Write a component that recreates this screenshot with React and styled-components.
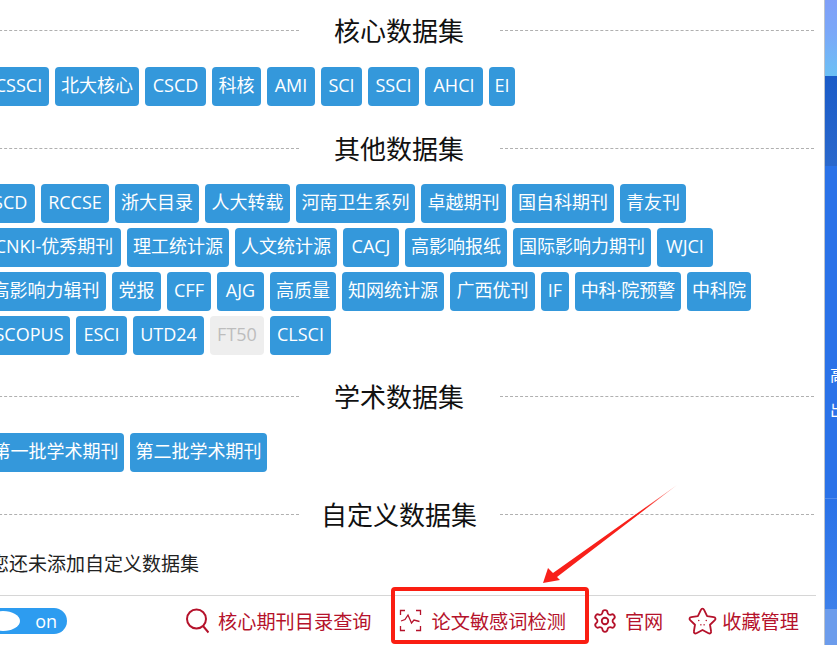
import React from "react";
import styled, { createGlobalStyle } from "styled-components";
import { Settings } from "lucide-react";

const Global = createGlobalStyle`
  html, body {
    margin: 0;
    padding: 0;
    height: 645px;
    overflow: hidden;
    background: #fff;
  }
  * { box-sizing: border-box; }
`;

const FONT = `"Open Sans", "Noto Sans CJK SC", sans-serif`;

const Page = styled.div`
  width: 837px;
  height: 645px;
  display: flex;
  overflow: hidden;
  position: relative;
  font-family: ${FONT};
`;

const Panel = styled.div`
  width: 825px;
  height: 645px;
  flex: none;
  background: #fff;
  border-right: 1px solid #bcc3cc;
  padding-top: 9px;
  overflow: hidden;
  display: flex;
  flex-direction: column;
`;

const Divider = styled.div`
  width: 830px;
  margin-left: -16px;
  height: 42px;
  flex: none;
  display: grid;
  grid-template-columns: 1fr 201px 1fr;
  align-items: center;
  margin-top: ${(p) => p.$top}px;
  &::before, &::after {
    content: "";
    border-top: 1px dashed #b0b0b0;
  }
`;

const Title = styled.div`
  font-size: 26px;
  line-height: 42px;
  padding-top: 1px;
  text-align: center;
  white-space: nowrap;
  color: #111;
`;

const Row = styled.div`
  display: flex;
  flex: none;
  gap: 6px;
  height: 39px;
  margin-top: ${(p) => p.$top || 5}px;
  margin-left: ${(p) => p.$left}px;
`;

const Tag = styled.span`
  flex: none;
  width: ${(p) => p.$w}px;
  height: 39px;
  border-radius: 4px;
  font-size: 18px;
  line-height: 37px;
  text-align: center;
  white-space: nowrap;
  background: ${(p) => (p.$off ? "#eeeeee" : "#3498db")};
  color: ${(p) => (p.$off ? "#bdbdbd" : "#fff")};
`;

const Empty = styled.div`
  font-size: 19px;
  line-height: 28px;
  color: #222;
  margin: 15px 0 0 -10px;
  flex: none;
  white-space: nowrap;
`;

const Footer = styled.div`
  flex: none;
  width: 816px;
  height: 50px;
  margin-top: 17px;
  border-top: 1px solid #d6d6d6;
  display: flex;
  align-items: center;
`;

const Toggle = styled.div`
  width: 87px;
  height: 26px;
  margin-left: -20px;
  border-radius: 13px;
  background: #2d9cf0;
  color: #fff;
  font-size: 18px;
  line-height: 26px;
  position: relative;
  display: flex;
  justify-content: flex-end;
  padding-right: 10px;
  &::before {
    content: "";
    position: absolute;
    left: 6px;
    top: 3px;
    width: 34px;
    height: 20px;
    border-radius: 50%;
    background: #fff;
  }
`;

const Links = styled.div`
  display: flex;
  align-items: center;
  margin-left: auto;
  margin-right: 17px;
`;

const LinkItem = styled.a`
  display: flex;
  align-items: center;
  height: 26px;
  gap: ${(p) => p.$gap}px;
  margin-left: ${(p) => p.$left || 0}px;
  color: #b5122b;
  font-size: 19.2px;
  line-height: 26px;
  white-space: nowrap;
  position: relative;
  svg { flex: none; }
`;

const Label = styled.span`
  padding-top: 2px;
`;

const Highlight = styled.div`
  position: absolute;
  left: -8px;
  top: -21px;
  width: 198px;
  height: 57px;
  border: 4px solid #fa1e12;
  border-radius: 4px;
`;

const Side = styled.div`
  flex: 1;
  height: 645px;
  display: flex;
  flex-direction: column;
  color: #fff;
  font-size: 16px;
  overflow: hidden;
`;

const SideTop = styled.div`
  height: 76px;
  background: linear-gradient(180deg, #7f9ff8 0%, #7aa8f8 45%, #6cc0f5 100%);
`;

const SideBand = styled.div`
  height: 90px;
  background: linear-gradient(180deg, #1a5bc8, #2a68cc);
`;

const SideMain = styled.div`
  height: 333px;
  padding: 192px 0 0 5px;
  line-height: 35px;
  background: #2a72e8;
  border-bottom: 1px solid #4f8aec;
`;

const SideMark = styled.div`
  width: 4px;
  height: 14px;
  margin: 29px 0 0 10px;
  background: #fff;
  border-radius: 2px;
`;

const SideLow = styled.div`
  height: 110px;
  background: linear-gradient(180deg, #2a72e8, #3d80ea);
`;

const SideFoot = styled.div`
  flex: 1;
  background: #6c9cec;
`;

const Arrow = styled.svg`
  position: absolute;
  left: 535px;
  top: 480px;
  pointer-events: none;
`;

const rows = {
  core: [["CSSCI", 61], ["北大核心", 84], ["CSCD", 61], ["科核", 49], ["AMI", 48], ["SCI", 41], ["SSCI", 51], ["AHCI", 58], ["EI", 26]],
  a: [["CSCD", 61], ["RCCSE", 68], ["浙大目录", 84], ["人大转载", 85], ["河南卫生系列", 119], ["卓越期刊", 85], ["国自科期刊", 102], ["青友刊", 66]],
  b: [["CNKI-优秀期刊", 134], ["理工统计源", 102], ["人文统计源", 102], ["CACJ", 56], ["高影响报纸", 102], ["国际影响力期刊", 138], ["WJCI", 56]],
  c: [["高影响力辑刊", 121], ["党报", 49], ["CFF", 44], ["AJG", 47], ["高质量", 66], ["知网统计源", 102], ["广西优刊", 85], ["IF", 28], ["中科·院预警", 106], ["中科院", 64]],
  d: [["SCOPUS", 82], ["ESCI", 51], ["UTD24", 71], ["FT50", 54], ["CLSCI", 61]],
  e: [["第一批学术期刊", 137], ["第二批学术期刊", 137]],
};

const Tags = ({ list, left, top }) => (
  <Row $left={left} $top={top}>
    {list.map(([t, w]) => (
      <Tag key={t} $w={w} $off={t === "FT50"}>{t}</Tag>
    ))}
  </Row>
);

const Heading = ({ top, children }) => (
  <Divider $top={top}>
    <Title>{children}</Title>
  </Divider>
);

const App = () => (
  <Page>
    <Global />
    <Panel>
      <Heading top={0}>核心数据集</Heading>
      <Tags list={rows.core} left={-12} top={16} />
      <Heading top={21}>其他数据集</Heading>
      <Tags list={rows.a} left={-26} top={15} />
      <Tags list={rows.b} left={-13} />
      <Tags list={rows.c} left={-15} />
      <Tags list={rows.d} left={-12} />
      <Heading top={20}>学术数据集</Heading>
      <Tags list={rows.e} left={-13} top={16} />
      <Heading top={21}>自定义数据集</Heading>
      <Empty>您还未添加自定义数据集</Empty>
      <Footer>
        <Toggle>on</Toggle>
        <Links>
          <LinkItem $gap={9}>
            <svg width="23" height="26" viewBox="0 0 23 26" fill="none" stroke="#b5122b" strokeWidth="2">
              <circle cx="10.500" cy="11" r="9.500" />
              <path d="M17 18l5.500 6.500" />
            </svg>
            <Label>核心期刊目录查询</Label>
          </LinkItem>
          <LinkItem $left={27} $gap={10}>
            <Highlight />
            <svg width="23" height="23" viewBox="0 0 23 23" fill="none" stroke="#b5122b" strokeWidth="1.3">
              <path d="M6 1.500H1.500V6M17 1.500h4.500V6M1.500 17v4.500H6M21.500 17v4.500H17" />
              <path d="M2 12l4-1.500L9 6l3.500 8 2.500-3 5.500 1.500" />
            </svg>
            <Label>论文敏感词检测</Label>
          </LinkItem>
          <LinkItem $left={26} $gap={7}>
            <Settings size={26} color="#b5122b" strokeWidth={1.7} />
            <Label>官网</Label>
          </LinkItem>
          <LinkItem $left={25} $gap={5}>
            <svg width="29" height="28" viewBox="0 0 27 26" fill="none" stroke="#b5122b" strokeWidth="1.700" strokeLinejoin="round">
              <path d="M13.500 1.500c.8 0 1.200.5 1.600 1.300l2.700 5.700 6.200.9c1.600.2 2.100 1.600 1 2.700l-4.500 4.400 1 6.200c.3 1.600-1 2.400-2.400 1.700l-5.600-3-5.600 3c-1.400.7-2.700-.1-2.400-1.700l1-6.200-4.500-4.400c-1.100-1.100-.6-2.500 1-2.700l6.200-.9 2.700-5.700c.4-.8.800-1.300 1.600-1.300z" />
              <circle cx="10" cy="12.500" r=".7" fill="#b5122b" stroke="none" />
              <circle cx="17" cy="12.500" r=".7" fill="#b5122b" stroke="none" />
              <path d="M11.500 16.500h4" strokeDasharray="1 2" strokeWidth="1.200" />
            </svg>
            <Label>收藏管理</Label>
          </LinkItem>
        </Links>
      </Footer>
    </Panel>
    <Side>
      <SideTop />
      <SideBand />
      <SideMain>
        高<br />出
        <SideMark />
      </SideMain>
      <SideLow />
      <SideFoot />
    </Side>
    <Arrow width="150" height="110" viewBox="0 0 150 110">
      <defs>
        <linearGradient id="arrowFade" x1="1" y1="0" x2="0" y2="1">
          <stop offset="0" stopColor="#fbb4ae" />
          <stop offset="0.25" stopColor="#f8201a" />
          <stop offset="1" stopColor="#f8201a" />
        </linearGradient>
      </defs>
      <path d="M142 5L18 93 13 88 8 103 25 100 22 97z" fill="url(#arrowFade)" />
    </Arrow>
  </Page>
);

export default App;
